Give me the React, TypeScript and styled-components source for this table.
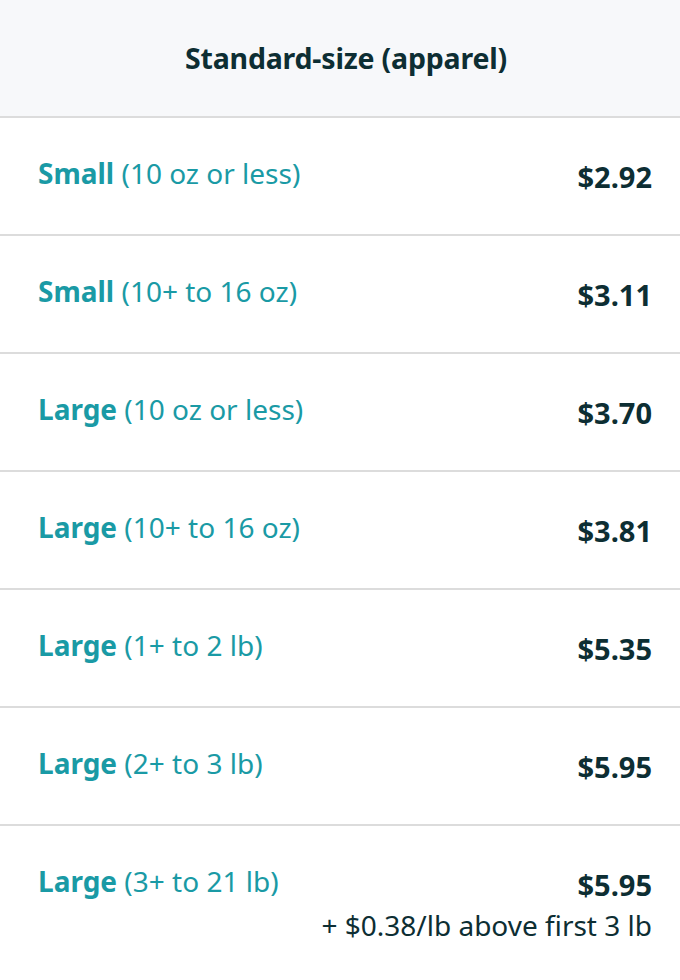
import styled, { createGlobalStyle } from 'styled-components';

const Global = createGlobalStyle`
  html, body {
    margin: 0;
    padding: 0;
    background: #ffffff;
  }
  body {
    font-family: "Noto Sans", "Open Sans", sans-serif;
    -webkit-font-smoothing: antialiased;
  }
`;

const Table = styled.div`
  width: 680px;
  display: flex;
  flex-direction: column;
`;

const Header = styled.div`
  height: 118px;
  box-sizing: border-box;
  background: #f7f8fa;
  border-bottom: 2px solid #dcdcdc;
  display: flex;
  align-items: center;
  justify-content: center;
  color: #0d2e33;
  font-size: 28.5px;
  font-weight: 700;
  letter-spacing: -0.2px;
  padding: 0 0 0 12px;
`;

const Row = styled.div`
  min-height: 118px;
  box-sizing: border-box;
  padding: 37px 28px 0 38px;
  border-bottom: 2px solid #dcdcdc;
  display: flex;
  justify-content: space-between;
  align-items: flex-start;

  &:last-child {
    border-bottom: none;
    min-height: 154px;
  }
`;

const Label = styled.div`
  color: #1a9aa5;
  font-size: 28px;
  line-height: 36px;
`;

const Size = styled.span`
  font-weight: 700;
`;

const PriceBox = styled.div`
  display: flex;
  flex-direction: column;
  align-items: flex-end;
  padding-top: 4px;
`;

const Price = styled.div`
  color: #0d2e33;
  font-size: 29px;
  font-weight: 700;
  line-height: 36px;
`;

const Note = styled.div`
  color: #0d2e33;
  font-size: 28px;
  line-height: 36px;
  margin-top: 4px;
`;

type Tier = { size: string; range: string; price: string; note?: string };

const tiers: Tier[] = [
  { size: 'Small', range: '(10 oz or less)', price: '$2.92' },
  { size: 'Small', range: '(10+ to 16 oz)', price: '$3.11' },
  { size: 'Large', range: '(10 oz or less)', price: '$3.70' },
  { size: 'Large', range: '(10+ to 16 oz)', price: '$3.81' },
  { size: 'Large', range: '(1+ to 2 lb)', price: '$5.35' },
  { size: 'Large', range: '(2+ to 3 lb)', price: '$5.95' },
  { size: 'Large', range: '(3+ to 21 lb)', price: '$5.95', note: '+ $0.38/lb above first 3 lb' },
];

export default function App() {
  return (
    <>
      <Global />
      <Table>
        <Header>Standard-size (apparel)</Header>
        {tiers.map((t, i) => (
          <Row key={i}>
            <Label>
              <Size>{t.size}</Size> {t.range}
            </Label>
            <PriceBox>
              <Price>{t.price}</Price>
              {t.note && <Note>{t.note}</Note>}
            </PriceBox>
          </Row>
        ))}
      </Table>
    </>
  );
}
